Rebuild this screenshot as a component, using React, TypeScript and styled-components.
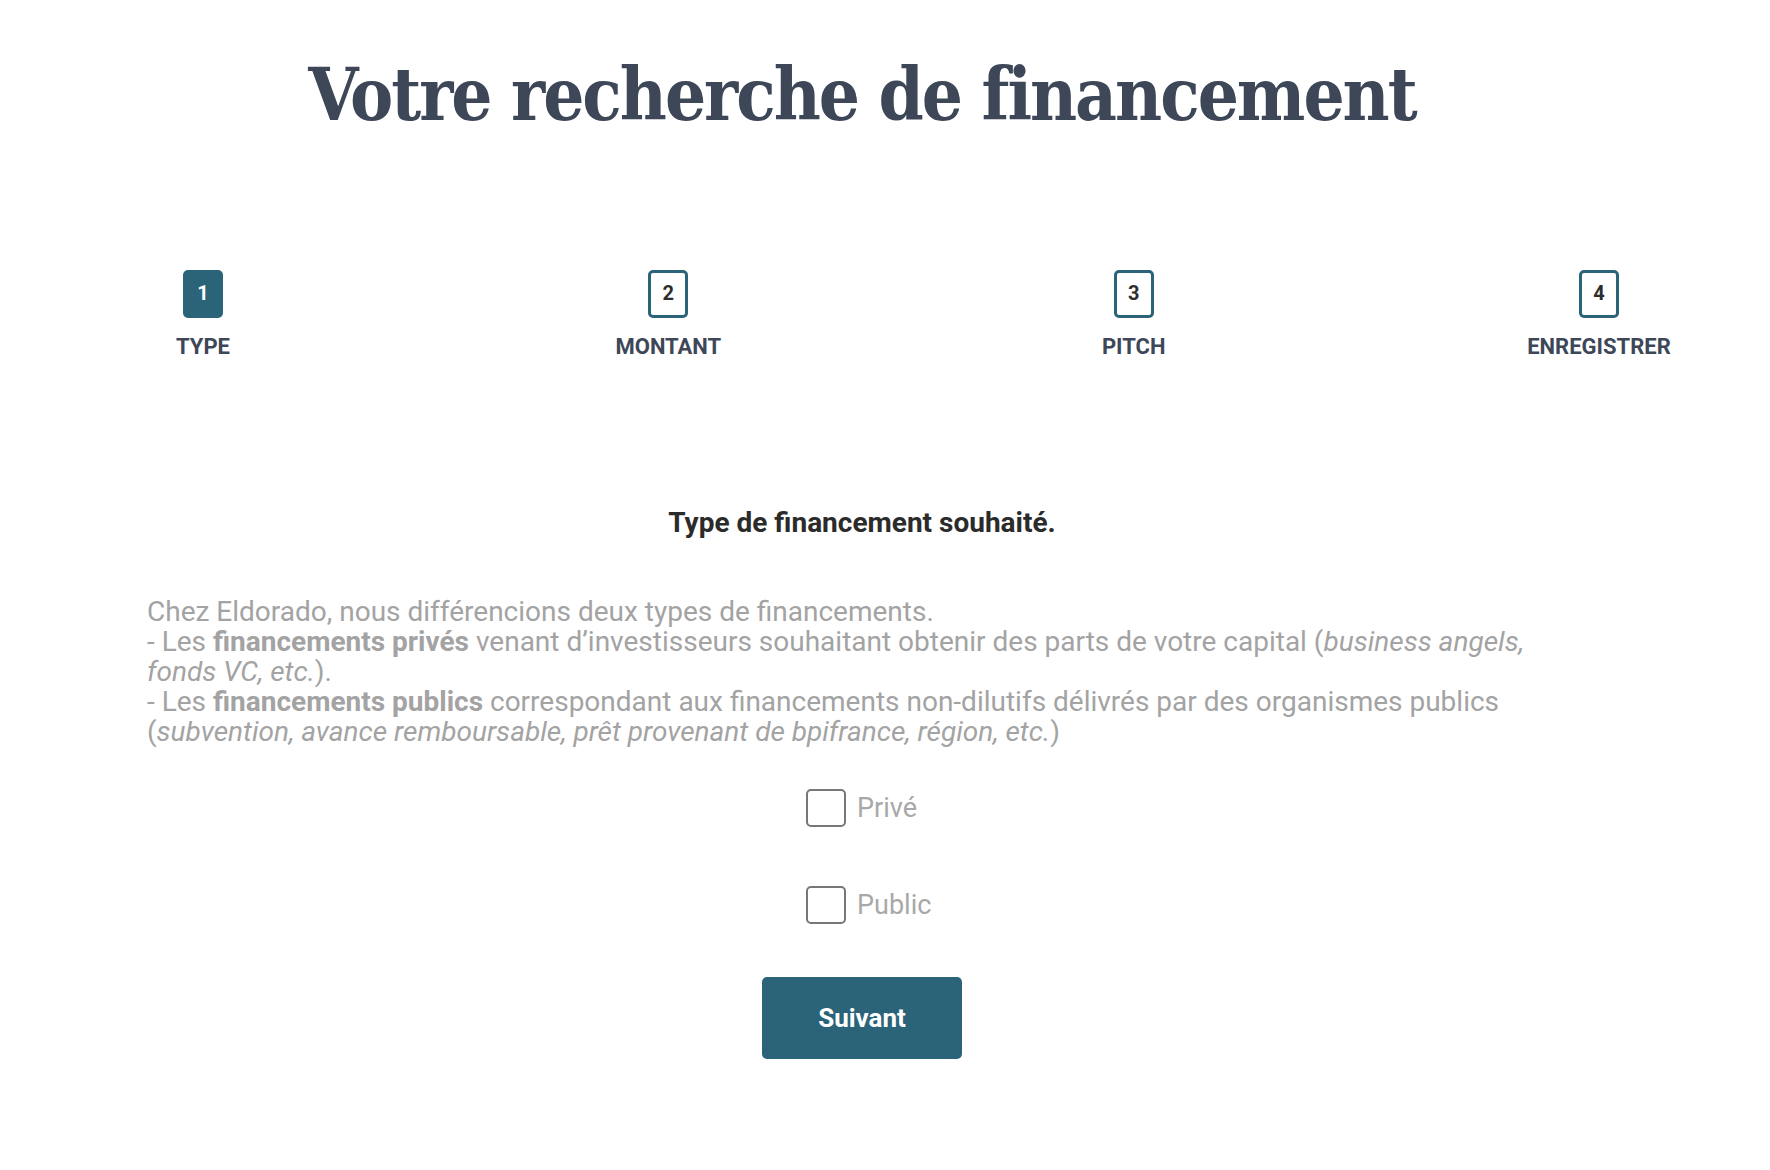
import { useState } from "react";
import styled, { createGlobalStyle } from "styled-components";

const GlobalStyle = createGlobalStyle`
  body {
    margin: 0;
    background: #fff;
    font-family: Roboto, "Liberation Sans", sans-serif;
  }
`;

const Page = styled.div`
  padding: 50px 0 80px 147px;
`;

const Main = styled.div`
  width: 1430px;
`;

const Title = styled.h1`
  margin: 0;
  text-align: center;
  font-family: "DejaVu Serif Condensed", "DejaVu Serif", serif;
  font-weight: 700;
  font-size: 72px;
  line-height: 90px;
  letter-spacing: -2px;
  color: #3d4758;
`;

const Stepper = styled.div`
  width: 1508px;
  margin-top: 130px;
  display: flex;
  justify-content: space-between;
`;

const Step = styled.div`
  width: 112px;
  display: flex;
  flex-direction: column;
  align-items: center;
`;

const StepNumber = styled.div<{ $active?: boolean }>`
  box-sizing: border-box;
  width: 40px;
  height: 48px;
  border: 3px solid #2b6479;
  border-radius: 5px;
  background: ${(p) => (p.$active ? "#2b6479" : "#fff")};
  color: ${(p) => (p.$active ? "#fff" : "#2d2d2d")};
  display: flex;
  align-items: center;
  justify-content: center;
  padding-bottom: 2px;
  font-weight: 700;
  font-size: 20px;
`;

const StepLabel = styled.div`
  margin-top: 16px;
  font-weight: 700;
  font-size: 22px;
  color: #3d4758;
  white-space: nowrap;
`;

const Heading = styled.h2`
  margin: 148px 0 0;
  text-align: center;
  font-weight: 700;
  font-size: 28px;
  line-height: 32px;
  color: #2b2b2b;
`;

const Intro = styled.p`
  margin: 58px 0 0;
  font-size: 28px;
  line-height: 30px;
  color: #a3a3a3;

  b {
    font-weight: 700;
  }
`;

const Options = styled.div`
  width: 112px;
  margin: 42px auto 0;
  display: flex;
  flex-direction: column;
  gap: 59px;
`;

const Option = styled.label`
  display: flex;
  align-items: center;
  gap: 11px;
  cursor: pointer;
  white-space: nowrap;
  font-size: 27px;
  color: #a8a8a8;
`;

const Box = styled.span<{ $checked?: boolean }>`
  box-sizing: border-box;
  flex: none;
  width: 40px;
  height: 38px;
  border: 2px solid #777;
  border-radius: 5px;
  background: ${(p) => (p.$checked ? "#2b6479" : "#fff")};
`;

const Actions = styled.div`
  margin-top: 53px;
  display: flex;
  justify-content: center;
`;

const NextButton = styled.button`
  width: 200px;
  height: 82px;
  border: none;
  border-radius: 5px;
  background: #2b6479;
  color: #fff;
  font-family: Roboto, "Liberation Sans", sans-serif;
  font-weight: 700;
  font-size: 26px;
  cursor: pointer;
`;

const steps = ["TYPE", "MONTANT", "PITCH", "ENREGISTRER"];

const App: React.FC = () => {
  const [choice, setChoice] = useState<Record<string, boolean>>({});

  const toggle = (key: string): void => {
    setChoice({ ...choice, [key]: !choice[key] });
  };

  return (
    <>
      <GlobalStyle />
      <Page>
        <Main>
          <Title>Votre recherche de financement</Title>

          <Stepper>
            {steps.map((label, i) => (
              <Step key={label}>
                <StepNumber $active={i === 0}>{i + 1}</StepNumber>
                <StepLabel>{label}</StepLabel>
              </Step>
            ))}
          </Stepper>

          <Heading>Type de financement souhaité.</Heading>

          <Intro>
            Chez Eldorado, nous différencions deux types de financements.
            <br />- Les <b>financements privés</b> venant d’investisseurs
            souhaitant obtenir des parts de votre capital (
            <i>business angels, fonds VC, etc.</i>).
            <br />- Les <b>financements publics</b> correspondant aux
            financements non-dilutifs délivrés par des organismes publics (
            <i>subvention, avance remboursable, prêt provenant de bpifrance, région, etc.</i>)
          </Intro>

          <Options>
            {["Privé", "Public"].map((key) => (
              <Option key={key} onClick={() => toggle(key)}>
                <Box $checked={choice[key]} />
                {key}
              </Option>
            ))}
          </Options>

          <Actions>
            <NextButton>Suivant</NextButton>
          </Actions>
        </Main>
      </Page>
    </>
  );
};

export default App;
